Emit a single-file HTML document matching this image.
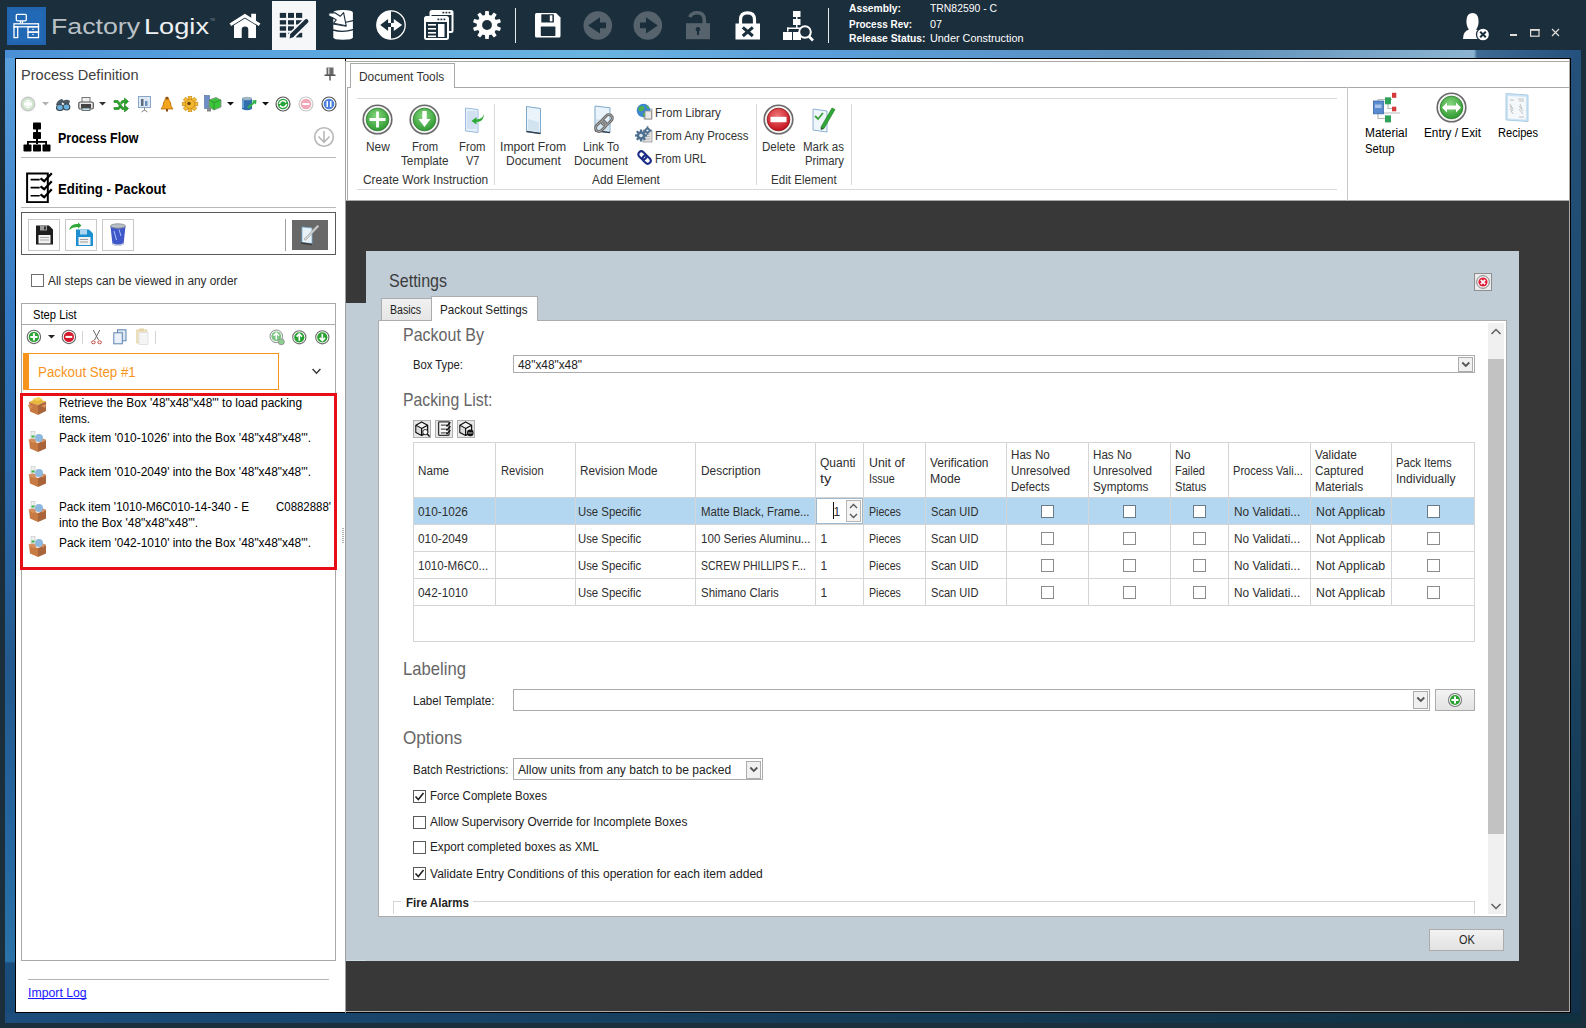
<!DOCTYPE html>
<html><head><meta charset="utf-8"><style>
html,body{margin:0;padding:0;width:1586px;height:1028px;overflow:hidden;background:#1b2e3c;font-family:"Liberation Sans", sans-serif;}
span{display:block;}
</style></head><body>
<div style="position:relative;width:1586px;height:1028px;overflow:hidden;">
<div style="position:absolute;left:5px;top:50px;width:1576px;height:8px;background:linear-gradient(to right,#4a8fd6 0%,#56a0de 12.4%,#60ace0 25%,#6ab4e0 37.8%,#5aa0dc 50.4%,#5a96cc 63.1%,#5a8db8 74.9%,#8cb4d2 93.2%,#3d6b94 93.4%,#23507c 100%)"></div>
<div style="position:absolute;left:5px;top:58px;width:10px;height:965px;background:linear-gradient(to bottom,#5aa0dc 0%,#3378c2 27%,#23598e 63%,#2566a0 80%,#2a72a8 93.6%,#1a4d7c 93.8%,#174a75 100%)"></div>
<div style="position:absolute;left:1571px;top:58px;width:10px;height:965px;background:linear-gradient(to bottom,#24507a 0%,#1b4866 50%,#123049 100%)"></div>
<div style="position:absolute;left:5px;top:1013px;width:1576px;height:10px;background:linear-gradient(to right,#1c4d7c 0%,#173f5f 40%,#11303f 100%)"></div>
<div style="position:absolute;left:15px;top:58px;width:1556px;height:955px;background:#000"></div>
<div style="position:absolute;left:16px;top:59px;width:329px;height:953px;background:#fff"></div>
<div style="position:absolute;left:346px;top:59px;width:1223px;height:142px;background:#fff"></div>
<div style="position:absolute;left:346px;top:201px;width:1223px;height:810px;background:#383838"></div>
<div style="position:absolute;left:1569px;top:59px;width:1px;height:953px;background:#a9a9a9"></div>
<div style="position:absolute;left:346px;top:1011px;width:1224px;height:1px;background:#a9a9a9"></div>
<div style="position:absolute;left:345px;top:61px;width:1px;height:952px;background:#a0a0a0"></div>
<svg style="position:absolute;left:7px;top:7px;" width="39" height="38" viewBox="0 0 39 38"><rect x="0" y="0" width="39" height="38" fill="#2264ae"/><rect x="3" y="3" width="33" height="32" fill="#2169b5"/>
<g fill="none" stroke="#fff" stroke-width="1.3">
<rect x="9.3" y="7.3" width="10" height="6.5" rx="1"/>
<path d="M13.5 14v2.3M15.5 14v2.3"/>
<rect x="7" y="16.8" width="24.5" height="3"/>
<rect x="7" y="19.8" width="3.7" height="10.8"/>
<rect x="21" y="19.8" width="10.5" height="5.3"/>
<rect x="21" y="25.1" width="10.5" height="5.5"/>
</g><path d="M25 22.3h2M25 27.6h2" stroke="#fff" stroke-width="0.8"/></svg>
<span id="t0" style="position:absolute;left:51px;top:16.15px;font-size:22.5px;line-height:22.5px;font-weight:400;color:#b9c1c6;white-space:nowrap;transform:scaleX(1.1864);transform-origin:0 0;">Factory</span>
<span id="t1" style="position:absolute;left:143.5px;top:16.15px;font-size:22.5px;line-height:22.5px;font-weight:400;color:#eef1f3;white-space:nowrap;transform:scaleX(1.2082);transform-origin:0 0;">Logix</span>
<span id="t2" style="position:absolute;left:210px;top:17.61px;font-size:4px;line-height:4px;font-weight:400;color:#7d8a93;white-space:nowrap;transform:scaleX(0.8649);transform-origin:0 0;">TM</span>
<svg style="position:absolute;left:228px;top:12px;" width="34" height="28" viewBox="0 0 34 28"><path d="M23.2 1.8 H28 V9.5 L23.2 6.8 Z" fill="#fff"/><path d="M2.4 12.8 L16.9 3.6 L31.6 12.8" fill="none" stroke="#fff" stroke-width="3.1" stroke-linejoin="miter"/>
<path d="M6 13.2 L16.9 6.6 L28 13.2 V26 H20.3 V17.8 Q20.3 14.5 17 14.5 Q13.7 14.5 13.7 17.8 V26 H6 Z" fill="#fff"/></svg>
<div style="position:absolute;left:272px;top:1px;width:44px;height:49px;background:#f6f7f9"></div>
<svg style="position:absolute;left:272px;top:5px;" width="44" height="40" viewBox="0 0 44 40"><g fill="#1b2e3c"><rect x="7.8" y="7.9" width="6.3" height="5"/><rect x="16" y="7.9" width="6" height="5"/><rect x="24" y="7.9" width="6.2" height="5"/>
<rect x="7.8" y="15.2" width="6.3" height="4.3"/><rect x="16" y="15.2" width="6" height="4.3"/><rect x="24" y="15.2" width="6.2" height="4.3"/>
<rect x="7.8" y="21.3" width="6.3" height="4.4"/><rect x="16" y="21.3" width="6" height="4.4"/><rect x="24" y="21.3" width="6.2" height="4.4"/>
<rect x="7.8" y="27.8" width="6.3" height="4.6"/><rect x="16" y="27.8" width="6" height="4.6"/><rect x="24" y="27.8" width="6.2" height="4.6"/></g>
<path d="M19 31.5 L35.5 15.3" stroke="#f6f7f9" stroke-width="7.5" stroke-linecap="round"/>
<path d="M20.3 30 L34.3 16.3" stroke="#1b2e3c" stroke-width="4.2" stroke-linecap="round"/><path d="M17.6 33.4 L18.6 28.6 L22 31.8 Z" fill="#1b2e3c"/></svg>
<svg style="position:absolute;left:322px;top:6px;" width="40" height="40" viewBox="0 0 40 40"><path d="M11.3 6.5 Q11.3 4 21 4 Q30.9 4 30.9 6.5 V31.3 Q30.9 33.8 21 33.8 Q11.3 33.8 11.3 31.3 Z" fill="#fff"/>
<path d="M11 24 Q21 26.8 31.2 23.6" fill="none" stroke="#1b2e3c" stroke-width="1.3"/>
<path d="M11 18 L24.4 20.3 M23.8 16.3 L31.2 14.6" fill="none" stroke="#1b2e3c" stroke-width="1.1"/>
<path d="M6.8 6.9 L13 6.7 L18.2 10.3 L21.6 6.6 L24.2 19.8 L11.6 17.2 L14.3 13.9 L11.2 12 L6.8 10 Z" fill="#fff" stroke="#1b2e3c" stroke-width="1.1" stroke-linejoin="round"/></svg>
<svg style="position:absolute;left:376px;top:10px;" width="30" height="30" viewBox="0 0 30 30"><circle cx="15" cy="15" r="14.2" fill="#1b2e3c" stroke="#fff" stroke-width="1.3"/><path d="M15 0.8 A14.2 14.2 0 0 0 15 29.2 Z" fill="#fff"/>
<path d="M4.2 15 L12.1 9 V13 H15 V17 H12.1 V21 Z" fill="#1b2e3c"/><path d="M26.2 15 L17.8 9 V13 H15 V17 H17.8 V21 Z" fill="#fff"/></svg>
<svg style="position:absolute;left:424px;top:10px;" width="30" height="30" viewBox="0 0 30 30"><g fill="none" stroke="#fff" stroke-width="2"><rect x="6.5" y="1" width="22" height="21" rx="1.5"/></g>
<rect x="1" y="7" width="23" height="22" rx="1.5" fill="#1b2e3c" stroke="#fff" stroke-width="2"/>
<rect x="1" y="7" width="23" height="5" fill="#fff"/><rect x="6.5" y="1" width="22" height="4" fill="#fff"/>
<g fill="#1b2e3c"><rect x="13.5" y="8.6" width="1.8" height="1.6"/><rect x="16.5" y="8.6" width="1.8" height="1.6"/><rect x="19.5" y="8.6" width="1.8" height="1.6"/><rect x="18.5" y="1.8" width="1.8" height="1.6"/><rect x="21.5" y="1.8" width="1.8" height="1.6"/><rect x="24.5" y="1.8" width="1.8" height="1.6"/></g>
<g fill="#fff"><rect x="4" y="14" width="8" height="1.6"/><rect x="4" y="18" width="8" height="1.6"/><rect x="4" y="22" width="8" height="1.6"/><rect x="4" y="25.5" width="8" height="1.6"/><rect x="14" y="14" width="6.5" height="13"/></g></svg>
<svg style="position:absolute;left:472px;top:10px;" width="30" height="30" viewBox="0 0 30 30"><path d="M12.88 5.43 L13.27 0.91 L16.73 0.91 L17.12 5.43 L18.91 6.01 L21.88 2.58 L24.68 4.61 L22.34 8.51 L23.44 10.03 L27.87 9.00 L28.94 12.29 L24.75 14.06 L24.75 15.94 L28.94 17.71 L27.87 21.00 L23.44 19.97 L22.34 21.49 L24.68 25.39 L21.88 27.42 L18.91 23.99 L17.12 24.57 L16.73 29.09 L13.27 29.09 L12.88 24.57 L11.09 23.99 L8.12 27.42 L5.32 25.39 L7.66 21.49 L6.56 19.97 L2.13 21.00 L1.06 17.71 L5.25 15.94 L5.25 14.06 L1.06 12.29 L2.13 9.00 L6.56 10.03 L7.66 8.51 L5.32 4.61 L8.12 2.58 L11.09 6.01 Z" fill="#fff"/><circle cx="15" cy="15" r="10.3" fill="#fff"/><circle cx="15" cy="15" r="4.9" fill="#1b2e3c"/></svg>
<div style="position:absolute;left:515px;top:8px;width:1px;height:35px;background:#e8ecef"></div>
<svg style="position:absolute;left:535px;top:13px;" width="26" height="25" viewBox="0 0 26 25"><path d="M0 1.5 Q0 0 1.5 0 H21 L25.5 4.5 V23 Q25.5 24.5 24 24.5 H1.5 Q0 24.5 0 23 Z" fill="#fff"/>
<rect x="6.3" y="1.2" width="12.6" height="8.4" rx="0.6" fill="#1b2e3c"/><rect x="14.8" y="2.3" width="2.6" height="6" fill="#fff"/>
<rect x="5.8" y="13.6" width="14.6" height="9.3" rx="0.6" fill="#1b2e3c"/></svg>
<svg style="position:absolute;left:583px;top:11px;" width="30" height="30" viewBox="0 0 30 30"><circle cx="14.8" cy="14.5" r="14.3" fill="#56636d"/><path d="M5 14.4 L17 6.3 V11.4 H23 V17.3 H17 V22.5 Z" fill="#1b2e3c"/></svg>
<svg style="position:absolute;left:633px;top:11px;" width="30" height="30" viewBox="0 0 30 30"><circle cx="14.8" cy="14.5" r="14.3" fill="#56636d"/><path d="M24.8 14.4 L13 6.3 V11.4 H7 V17.3 H13 V22.5 Z" fill="#1b2e3c"/></svg>
<svg style="position:absolute;left:686px;top:11px;" width="25" height="29" viewBox="0 0 25 29"><path d="M3.8 6.2 Q5.5 1.8 11 1.8 Q18.3 1.8 18.3 9 V13" fill="none" stroke="#56636d" stroke-width="3.6"/>
<rect x="0" y="12.2" width="24" height="16" fill="#56636d"/><circle cx="12" cy="18.2" r="2.3" fill="#1b2e3c"/><rect x="11" y="19" width="2" height="5" fill="#1b2e3c"/></svg>
<svg style="position:absolute;left:735px;top:11px;" width="26" height="29" viewBox="0 0 26 29"><path d="M5.5 13 V8.5 Q5.5 1.8 12.5 1.8 Q19.5 1.8 19.5 8.5 V13" fill="none" stroke="#fff" stroke-width="3.2"/>
<rect x="0.5" y="12.5" width="24.5" height="16" fill="#fff"/><path d="M7.8 16.3 L17.8 25 M17.8 16.3 L7.8 25" stroke="#1b2e3c" stroke-width="3"/></svg>
<svg style="position:absolute;left:782px;top:10px;" width="32" height="32" viewBox="0 0 32 32"><g fill="#fff"><rect x="11" y="1" width="7.5" height="6"/><rect x="14" y="7" width="1.5" height="2"/><rect x="11" y="9" width="7.5" height="6"/><rect x="14" y="15" width="1.5" height="3"/>
<rect x="5" y="17.5" width="14" height="1.5"/><rect x="5" y="17.5" width="1.5" height="4"/>
<rect x="1" y="22" width="9" height="8"/><rect x="11" y="22" width="8" height="8"/></g>
<circle cx="23" cy="22" r="5.8" fill="#1b2e3c" stroke="#fff" stroke-width="2"/><path d="M26.5 26 L31 30.5" stroke="#fff" stroke-width="2.6"/></svg>
<div style="position:absolute;left:828px;top:8px;width:1px;height:35px;background:#e8ecef"></div>
<span id="t3" style="position:absolute;left:849px;top:3.27px;font-size:11.5px;line-height:11.5px;font-weight:700;color:#fff;white-space:nowrap;transform:scaleX(0.8939);transform-origin:0 0;">Assembly:</span>
<span id="t4" style="position:absolute;left:929.5px;top:3.27px;font-size:11.5px;line-height:11.5px;font-weight:400;color:#fff;white-space:nowrap;transform:scaleX(0.9037);transform-origin:0 0;">TRN82590 - C</span>
<span id="t5" style="position:absolute;left:849px;top:18.67px;font-size:11.5px;line-height:11.5px;font-weight:700;color:#fff;white-space:nowrap;transform:scaleX(0.8645);transform-origin:0 0;">Process Rev:</span>
<span id="t6" style="position:absolute;left:929.5px;top:18.67px;font-size:11.5px;line-height:11.5px;font-weight:400;color:#fff;white-space:nowrap;transform:scaleX(0.9377);transform-origin:0 0;">07</span>
<span id="t7" style="position:absolute;left:849px;top:33.27px;font-size:11.5px;line-height:11.5px;font-weight:700;color:#fff;white-space:nowrap;transform:scaleX(0.8931);transform-origin:0 0;">Release Status:</span>
<span id="t8" style="position:absolute;left:929.5px;top:33.27px;font-size:11.5px;line-height:11.5px;font-weight:400;color:#fff;white-space:nowrap;transform:scaleX(0.9437);transform-origin:0 0;">Under Construction</span>
<svg style="position:absolute;left:1460px;top:12px;" width="30" height="30" viewBox="0 0 30 30"><path d="M3 27 Q3 19 9 17.5 Q6 14 6.5 8 Q7 1 12.5 1 Q18 1 18.5 8 Q19 14 16 17.5 Q20 18.5 21.5 20 V27 Z" fill="#fff"/>
<circle cx="23" cy="22.5" r="6.5" fill="#fff" stroke="#1b2e3c" stroke-width="1.3"/><path d="M20.2 19.7 L25.8 25.3 M25.8 19.7 L20.2 25.3" stroke="#1b2e3c" stroke-width="2"/></svg>
<div style="position:absolute;left:1510px;top:34px;width:7px;height:2px;background:#e2ddd8"></div>
<svg style="position:absolute;left:1529px;top:28px;" width="12" height="10" viewBox="0 0 12 10"><rect x="1.6" y="1.6" width="8.4" height="6.6" fill="none" stroke="#e2ddd8" stroke-width="1.2"/><rect x="1" y="1" width="9.6" height="1.8" fill="#e2ddd8"/></svg>
<svg style="position:absolute;left:1550px;top:27px;" width="12" height="12" viewBox="0 0 12 12"><path d="M2 2 L9 9 M9 2 L2 9" stroke="#e2ddd8" stroke-width="1.2"/></svg>
<span id="t9" style="position:absolute;left:21px;top:67.18px;font-size:15.5px;line-height:15.5px;font-weight:400;color:#404040;white-space:nowrap;transform:scaleX(0.9406);transform-origin:0 0;">Process Definition</span>
<svg style="position:absolute;left:324px;top:67px;" width="12" height="14" viewBox="0 0 12 14"><rect x="2.5" y="0.5" width="7" height="7.5" fill="#6b6b6b"/><rect x="4" y="1" width="1.5" height="6.5" fill="#c8c8c8"/><rect x="0.5" y="7.5" width="11" height="1.5" fill="#555"/><rect x="5.3" y="9" width="1.4" height="4.5" fill="#555"/></svg>
<svg style="position:absolute;left:20px;top:96px;" width="16" height="16" viewBox="0 0 16 16"><circle cx="8" cy="8" r="6.8" fill="#e2efe2" stroke="#c4c4c4" stroke-width="1.2"/><path d="M8 4 V12 M4 8 H12" stroke="#fff" stroke-width="2.4"/><circle cx="8" cy="8" r="5.3" fill="none" stroke="#b5dcb5" stroke-width="0.8"/></svg>
<svg style="position:absolute;left:42px;top:102px;" width="7" height="4" viewBox="0 0 7 4"><path d="M0 0 H7 L3.5 3.5 Z" fill="#b0b0b0"/></svg>
<svg style="position:absolute;left:55px;top:97px;" width="16" height="14" viewBox="0 0 16 14"><path d="M1 8 Q2 3 7 2 L9 4 Q6 6 6 9 Z" fill="#4b5964"/><path d="M7 5 Q11 1 15 4 L13 10 Z" fill="#4b5964"/><ellipse cx="5" cy="10.5" rx="3.5" ry="3" fill="#6cb2df" stroke="#3e4a52" stroke-width="1.2"/><ellipse cx="11.5" cy="10" rx="3.3" ry="3" fill="#6cb2df" stroke="#3e4a52" stroke-width="1.2"/></svg>
<svg style="position:absolute;left:78px;top:97px;" width="16" height="14" viewBox="0 0 16 14"><rect x="4" y="0.5" width="8" height="5" fill="#f0f0f0" stroke="#777" stroke-width="1"/><rect x="0.8" y="5" width="14.5" height="7" rx="1.5" fill="#e8e8e8" stroke="#555" stroke-width="1.2"/><rect x="3" y="7" width="10" height="4" fill="#444"/><rect x="4" y="11" width="8" height="2.5" fill="#bfe0f0" stroke="#555" stroke-width="0.8"/></svg>
<svg style="position:absolute;left:99px;top:102px;" width="7" height="4" viewBox="0 0 7 4"><path d="M0 0 H7 L3.5 3.5 Z" fill="#333"/></svg>
<svg style="position:absolute;left:113px;top:97px;" width="16" height="15" viewBox="0 0 16 15"><path d="M1 3.5 H5 L10 10.5 H11.5 V8 L15.5 11.5 L11.5 15 V12.5 H9 L4 5.5 H1 Z M1 10.5 H5 L6.3 9 L7.6 10.8 L6 12.5 H1 Z M9 3.5 H11.5 V1 L15.5 4.5 L11.5 8 V5.5 H10 L8.6 7.2 L7.5 5.5 Z" fill="#2aa52a" stroke="#167a16" stroke-width="0.6"/></svg>
<svg style="position:absolute;left:138px;top:96px;" width="14" height="17" viewBox="0 0 14 17"><rect x="0.5" y="0.5" width="12" height="11" fill="#dfe9f5" stroke="#8aa6c8" stroke-width="1"/><rect x="3" y="3" width="2.5" height="7" fill="#5a6a80"/><rect x="7" y="5" width="2.5" height="5" fill="#6a8fbf"/><path d="M6.5 11.5 V14.5 M3.5 16 L6.5 14 L9.5 16" stroke="#888" stroke-width="1" fill="none"/></svg>
<svg style="position:absolute;left:160px;top:96px;" width="14" height="17" viewBox="0 0 14 17"><path d="M7 1 Q9 1 9 4 Q11 6 11 10 L13 13 H1 L3 10 Q3 6 5 4 Q5 1 7 1 Z" fill="#f3a51b" stroke="#b86b0c" stroke-width="0.8"/><rect x="6" y="13" width="2" height="2.5" fill="#8a4b10"/><path d="M6 1 h2 v2.5 h-2z" fill="#8a5020"/></svg>
<svg style="position:absolute;left:181px;top:96px;" width="18" height="16" viewBox="0 0 18 16"><g transform="translate(9 8)" fill="#f2b830" stroke="#c7861a" stroke-width="0.6"><circle r="5.5"/><g><rect x="-1.8" y="-7.8" width="3.6" height="3.5"/><rect x="-1.8" y="4.3" width="3.6" height="3.5"/><rect x="-7.8" y="-1.8" width="3.5" height="3.6"/><rect x="4.3" y="-1.8" width="3.5" height="3.6"/></g><g transform="rotate(45)"><rect x="-1.8" y="-7.8" width="3.6" height="3.5"/><rect x="-1.8" y="4.3" width="3.6" height="3.5"/><rect x="-7.8" y="-1.8" width="3.5" height="3.6"/><rect x="4.3" y="-1.8" width="3.5" height="3.6"/></g></g><circle cx="8" cy="7.5" r="1.8" fill="#6b4a10"/></svg>
<svg style="position:absolute;left:204px;top:95px;" width="18" height="17" viewBox="0 0 18 17"><rect x="0.5" y="0.5" width="5" height="13" fill="#6e8fc5" stroke="#4d6da3" stroke-width="0.6"/><path d="M5 5 L12 2.5 L17 5 V12 L10 15 L5 12 Z" fill="#3dc43d" stroke="#888" stroke-width="0.8"/><path d="M5 5 L10 7.5 L17 5 M10 7.5 V15" stroke="#2a8f2a" stroke-width="0.8" fill="none"/><rect x="3" y="13" width="4" height="3.5" fill="#888"/></svg>
<svg style="position:absolute;left:227px;top:102px;" width="7" height="4" viewBox="0 0 7 4"><path d="M0 0 H7 L3.5 3.5 Z" fill="#111"/></svg>
<svg style="position:absolute;left:241px;top:96px;" width="16" height="16" viewBox="0 0 16 16"><path d="M1 2.5 Q6 0 11 2.5 V13 Q6 15.5 1 13 Z" fill="#2f6fae"/><ellipse cx="6" cy="2.5" rx="5" ry="1.8" fill="#9fb4c4"/><path d="M2 4 V12" stroke="#8fc3ee" stroke-width="1.2"/><path d="M6 11 L12 6 L11 4.5 L15.5 4 L15 8.5 L13.5 7.3 L8 12.5 Z" fill="#2fb14a"/></svg>
<svg style="position:absolute;left:262px;top:102px;" width="7" height="4" viewBox="0 0 7 4"><path d="M0 0 H7 L3.5 3.5 Z" fill="#111"/></svg>
<svg style="position:absolute;left:275px;top:96px;" width="16" height="16" viewBox="0 0 16 16"><circle cx="8" cy="8" r="7" fill="#fff" stroke="#555" stroke-width="1.2"/><circle cx="8" cy="8" r="5.3" fill="#29a33a"/><path d="M4.5 8 A3.5 3.5 0 0 1 11 6.5 M11.5 8 A3.5 3.5 0 0 1 5 9.5" stroke="#fff" stroke-width="1.5" fill="none"/></svg>
<svg style="position:absolute;left:298px;top:96px;" width="16" height="16" viewBox="0 0 16 16"><circle cx="8" cy="8" r="7" fill="#fff" stroke="#c8c8c8" stroke-width="1.2"/><circle cx="8" cy="8" r="5.3" fill="#f0a8b8"/><rect x="4.5" y="7" width="7" height="2" fill="#fff"/></svg>
<svg style="position:absolute;left:321px;top:96px;" width="16" height="16" viewBox="0 0 16 16"><circle cx="8" cy="8" r="7" fill="#fff" stroke="#555" stroke-width="1.2"/><circle cx="8" cy="8" r="5.3" fill="#4b7fe0"/><rect x="5.5" y="5" width="1.5" height="6" fill="#fff"/><rect x="9" y="5" width="1.5" height="6" fill="#fff"/></svg>
<svg style="position:absolute;left:23px;top:122px;" width="28" height="30" viewBox="0 0 28 30"><g fill="#000"><rect x="10" y="0.5" width="8" height="7" rx="0.8"/><rect x="13" y="7" width="2" height="3"/><rect x="10" y="10" width="8" height="7" rx="0.8"/><rect x="13" y="17" width="2" height="5"/>
<rect x="4" y="19" width="20" height="1.8"/><rect x="4" y="19" width="1.8" height="4"/><rect x="22.2" y="19" width="1.8" height="4"/>
<rect x="0.5" y="22.5" width="8" height="7" rx="0.8"/><rect x="10" y="22.5" width="8" height="7" rx="0.8"/><rect x="19.5" y="22.5" width="8" height="7" rx="0.8"/></g></svg>
<span id="t10" style="position:absolute;left:57.5px;top:131.45px;font-size:14px;line-height:14px;font-weight:700;color:#000;white-space:nowrap;transform:scaleX(0.8918);transform-origin:0 0;">Process Flow</span>
<svg style="position:absolute;left:313px;top:126px;" width="22" height="22" viewBox="0 0 22 22"><circle cx="11" cy="11" r="9.3" fill="none" stroke="#b8b8b8" stroke-width="1.6"/><path d="M11 5 V16 M5.5 10.5 L11 16.3 L16.5 10.5" fill="none" stroke="#b8b8b8" stroke-width="1.6"/></svg>
<div style="position:absolute;left:21px;top:157px;width:315px;height:1px;background:#b9b9b9"></div>
<svg style="position:absolute;left:25px;top:171px;" width="28" height="32" viewBox="0 0 28 32"><rect x="2.1" y="2.5" width="20.7" height="28.7" fill="none" stroke="#000" stroke-width="2"/>
<g stroke="#000" stroke-width="1.6"><path d="M5.6 8.6 H14.7 M5.6 16.6 H14.7 M5.6 24.7 H14.7"/></g>
<g fill="none" stroke="#000" stroke-width="2.3" stroke-linejoin="miter"><path d="M15.5 7.3 L19.2 10.2 L26.8 2.3"/><path d="M15.5 15.3 L19.2 18.2 L26.8 10.3"/><path d="M15.5 23.3 L19.2 26.2 L26.8 18.3"/></g></svg>
<span id="t11" style="position:absolute;left:57.5px;top:181.65px;font-size:14px;line-height:14px;font-weight:700;color:#000;white-space:nowrap;transform:scaleX(0.9445);transform-origin:0 0;">Editing - Packout</span>
<div style="position:absolute;left:21px;top:207px;width:315px;height:1px;background:#b9b9b9"></div>
<div style="position:absolute;left:21px;top:212px;width:315px;height:43px;box-sizing:border-box;border:1px solid #5a5a5a;background:#fff"></div>
<div style="position:absolute;left:28px;top:219px;width:32px;height:32px;box-sizing:border-box;border:1px solid #c8c8c8"></div>
<div style="position:absolute;left:65px;top:219px;width:32px;height:32px;box-sizing:border-box;border:1px solid #c8c8c8"></div>
<div style="position:absolute;left:102px;top:219px;width:32px;height:32px;box-sizing:border-box;border:1px solid #c8c8c8"></div>
<svg style="position:absolute;left:35px;top:224px;" width="19" height="22" viewBox="0 0 19 22"><path d="M1 1.5 H14 L18 5.5 V20.5 H1 Z" fill="#1e1e1e"/><rect x="5" y="1.5" width="7" height="5" fill="#9a9a9a"/><rect x="9" y="2.5" width="2" height="3" fill="#333"/><rect x="3.5" y="11" width="12" height="8.5" fill="#f2f2f2"/><path d="M5 13.5 H14 M5 16 H14" stroke="#999" stroke-width="0.8"/></svg>
<svg style="position:absolute;left:68px;top:222px;" width="27" height="25" viewBox="0 0 27 25"><path d="M8 7.5 H21 L25 11.5 V24 H8 Z" fill="#1d8fd0"/><rect x="12" y="7.5" width="7" height="5" fill="#aed6ef"/><rect x="10.5" y="15" width="12" height="8" fill="#f2f2f2"/><path d="M12 17.5 H20 M12 20 H20" stroke="#888" stroke-width="0.8"/><path d="M1 8 Q3 1 10 2 V0.5 L13.5 3.5 L10 6.5 V5 Q5 4.5 1 8 Z" fill="#2ea836"/></svg>
<svg style="position:absolute;left:109px;top:223px;" width="18" height="24" viewBox="0 0 18 24"><path d="M1.5 3 H16.5 L14.5 21.5 Q9 24 3.5 21.5 Z" fill="#3f57c8"/><ellipse cx="9" cy="3" rx="7.5" ry="2.2" fill="#b7c0c8" stroke="#888" stroke-width="0.8"/><path d="M5 8 L7.5 17 M10 6.5 L12 13" stroke="#a8c4ff" stroke-width="1"/><path d="M3.5 20 Q9 23 14.5 20 V21.8 Q9 24.5 3.5 21.8Z" fill="#cfd6dc"/></svg>
<div style="position:absolute;left:285px;top:219px;width:1px;height:32px;background:#a0a0a0"></div>
<div style="position:absolute;left:292px;top:220px;width:36px;height:30px;background:#686868"></div>
<svg style="position:absolute;left:298px;top:223px;" width="25" height="24" viewBox="0 0 25 24"><path d="M4 4 L14 5 V20.5 L4 19.5 Z" fill="#e8f2f8" stroke="#7aaed6" stroke-width="0.8"/><path d="M3 20 L14 21.5" stroke="#3a3a3a" stroke-width="1.5"/><path d="M6 16 L19.5 2 L21 3.5 L7.5 17.5 Z" fill="#d0d0d0" stroke="#999" stroke-width="0.5"/></svg>
<div style="position:absolute;left:31px;top:274px;width:13px;height:13px;box-sizing:border-box;border:1px solid #6d6d6d;background:#fff"></div>
<span id="t12" style="position:absolute;left:48.3px;top:274.84px;font-size:12px;line-height:12px;font-weight:400;color:#2b2b2b;white-space:nowrap;transform:scaleX(0.9859);transform-origin:0 0;">All steps can be viewed in any order</span>
<div style="position:absolute;left:21px;top:303px;width:315px;height:658px;box-sizing:border-box;border:1px solid #a9a9a9;background:#fff"></div>
<span id="t13" style="position:absolute;left:33.3px;top:308.54px;font-size:12px;line-height:12px;font-weight:400;color:#000;white-space:nowrap;transform:scaleX(0.9357);transform-origin:0 0;">Step List</span>
<div style="position:absolute;left:21px;top:324px;width:315px;height:1px;background:#a9a9a9"></div>
<svg style="position:absolute;left:26px;top:329px;" width="16" height="16" viewBox="0 0 16 16"><circle cx="7.9" cy="7.9" r="6.7" fill="#fff" stroke="#666" stroke-width="1.1"/><circle cx="7.9" cy="7.9" r="5.2" fill="#2aa332"/><path d="M7.9 4.3 V11.5 M4.3 7.9 H11.5" stroke="#fff" stroke-width="2"/></svg>
<svg style="position:absolute;left:48px;top:335px;" width="7" height="4" viewBox="0 0 7 4"><path d="M0 0 H7 L3.5 3.5 Z" fill="#222"/></svg>
<svg style="position:absolute;left:61px;top:329px;" width="16" height="16" viewBox="0 0 16 16"><circle cx="7.9" cy="7.9" r="6.7" fill="#fff" stroke="#666" stroke-width="1.1"/><circle cx="7.9" cy="7.9" r="5.2" fill="#d5192b"/><rect x="4.5" y="6.9" width="6.8" height="2" fill="#fff"/></svg>
<div style="position:absolute;left:82px;top:331px;width:1px;height:13px;background:#d5d5d5"></div>
<svg style="position:absolute;left:90px;top:329px;" width="13" height="17" viewBox="0 0 13 17"><path d="M3.3 1 L8.5 11 M9.8 1 L4.5 11" stroke="#6a6a6a" stroke-width="1"/><ellipse cx="3.4" cy="13.3" rx="1.8" ry="1.5" fill="none" stroke="#c0453b" stroke-width="1"/><ellipse cx="9.6" cy="13.3" rx="1.8" ry="1.5" fill="none" stroke="#c0453b" stroke-width="1"/></svg>
<svg style="position:absolute;left:113px;top:329px;" width="14" height="16" viewBox="0 0 14 16"><rect x="4.5" y="0.8" width="8.5" height="11" fill="#dbe7f3" stroke="#5f84b0" stroke-width="1"/><rect x="0.8" y="3.8" width="8.5" height="11" fill="#eaf1f8" stroke="#5f84b0" stroke-width="1"/></svg>
<svg style="position:absolute;left:136px;top:328px;" width="13" height="17" viewBox="0 0 13 17"><rect x="0.8" y="2" width="10" height="13" fill="#f2e6c4" stroke="#dccb9a" stroke-width="0.8"/><rect x="3" y="4.5" width="9" height="12" fill="#f5f5f5" stroke="#ddd" stroke-width="0.8"/><rect x="3" y="0.5" width="5" height="3" fill="#e5d5a8"/></svg>
<div style="position:absolute;left:155px;top:331px;width:1px;height:13px;background:#d5d5d5"></div>
<svg style="position:absolute;left:269px;top:329px;" width="17" height="18" viewBox="0 0 17 18"><circle cx="7.3" cy="7.3" r="6.3" fill="#fff" stroke="#8a8a8a" stroke-width="1"/><circle cx="7.3" cy="7.3" r="4.9" fill="#7cc482"/><path d="M7.3 4 V10.5 M4.6 6.7 L7.3 4 L10 6.7" stroke="#fff" stroke-width="1.5" fill="none"/><circle cx="12.3" cy="12.8" r="3" fill="#8ccf8f" stroke="#888" stroke-width="0.8"/></svg>
<svg style="position:absolute;left:292px;top:330px;" width="15" height="15" viewBox="0 0 15 15"><circle cx="7.3" cy="7.3" r="6.6" fill="#fff" stroke="#6e6e6e" stroke-width="1.1"/><circle cx="7.3" cy="7.3" r="5.1" fill="#27a22f"/><path d="M7.3 4 V10.8 M4.6 6.7 L7.3 4 L10 6.7" stroke="#fff" stroke-width="1.7" fill="none"/></svg>
<svg style="position:absolute;left:315px;top:330px;" width="15" height="15" viewBox="0 0 15 15"><circle cx="7.3" cy="7.3" r="6.6" fill="#fff" stroke="#6e6e6e" stroke-width="1.1"/><circle cx="7.3" cy="7.3" r="5.1" fill="#27a22f"/><path d="M7.3 3.8 V10.6 M4.6 7.9 L7.3 10.6 L10 7.9" stroke="#fff" stroke-width="1.7" fill="none"/></svg>
<div style="position:absolute;left:23px;top:353px;width:256px;height:37px;box-sizing:border-box;border:1px solid #f7941d;border-left:6px solid #f7941d;background:#fff"></div>
<span id="t14" style="position:absolute;left:37.5px;top:364.95px;font-size:14px;line-height:14px;font-weight:400;color:#f7941d;white-space:nowrap;transform:scaleX(0.9518);transform-origin:0 0;">Packout Step #1</span>
<svg style="position:absolute;left:311px;top:367px;" width="11" height="9" viewBox="0 0 11 9"><path d="M1.6 2 L5.5 6.2 L9.4 2" fill="none" stroke="#3a3a3a" stroke-width="1.5"/></svg>
<div style="position:absolute;left:20px;top:393px;width:317px;height:177px;box-sizing:border-box;border:3px solid #e80e18"></div>
<svg style="position:absolute;left:27px;top:396px;" width="21" height="20" viewBox="0 0 21 20"><path d="M2 6 L10 2.5 L19 5.5 L11 9 Z" fill="#e8b83a"/><path d="M2 6 L11 9 V19 L3 15.5 Z" fill="#c87a43"/><path d="M11 9 L19 5.5 V15 L11 19 Z" fill="#a9643a"/><path d="M0.5 8.5 L6 10.5 L3 13 Z M19.5 7.5 L14 10 L18 12 Z" fill="#d58f5a"/><path d="M5 3 L12 1 L16 3.5 L10 5Z" fill="#f2d060"/></svg>
<svg style="position:absolute;left:27px;top:431px;" width="21" height="22" viewBox="0 0 21 22"><path d="M2 9 L11 12 V21 L3 17.5 Z" fill="#c87a43"/><path d="M11 12 L19 9 V17.5 L11 21 Z" fill="#a9643a"/><path d="M1 9 L5 7 L11 9.5 L6 12 Z M19 8.5 L14 7 L11 9.5 L16 11.5 Z" fill="#d69060"/><circle cx="12" cy="7" r="4" fill="#8db8e0"/><rect x="4" y="0.5" width="4" height="7" fill="#f0f0f0" stroke="#bbb" stroke-width="0.5"/><rect x="4.5" y="4.5" width="3" height="2" fill="#3cb34a"/></svg>
<svg style="position:absolute;left:27px;top:466px;" width="21" height="22" viewBox="0 0 21 22"><path d="M2 9 L11 12 V21 L3 17.5 Z" fill="#c87a43"/><path d="M11 12 L19 9 V17.5 L11 21 Z" fill="#a9643a"/><path d="M1 9 L5 7 L11 9.5 L6 12 Z M19 8.5 L14 7 L11 9.5 L16 11.5 Z" fill="#d69060"/><circle cx="12" cy="7" r="4" fill="#8db8e0"/><rect x="4" y="0.5" width="4" height="7" fill="#f0f0f0" stroke="#bbb" stroke-width="0.5"/><rect x="4.5" y="4.5" width="3" height="2" fill="#3cb34a"/></svg>
<svg style="position:absolute;left:27px;top:501px;" width="21" height="22" viewBox="0 0 21 22"><path d="M2 9 L11 12 V21 L3 17.5 Z" fill="#c87a43"/><path d="M11 12 L19 9 V17.5 L11 21 Z" fill="#a9643a"/><path d="M1 9 L5 7 L11 9.5 L6 12 Z M19 8.5 L14 7 L11 9.5 L16 11.5 Z" fill="#d69060"/><circle cx="12" cy="7" r="4" fill="#8db8e0"/><rect x="4" y="0.5" width="4" height="7" fill="#f0f0f0" stroke="#bbb" stroke-width="0.5"/><rect x="4.5" y="4.5" width="3" height="2" fill="#3cb34a"/></svg>
<svg style="position:absolute;left:27px;top:536px;" width="21" height="22" viewBox="0 0 21 22"><path d="M2 9 L11 12 V21 L3 17.5 Z" fill="#c87a43"/><path d="M11 12 L19 9 V17.5 L11 21 Z" fill="#a9643a"/><path d="M1 9 L5 7 L11 9.5 L6 12 Z M19 8.5 L14 7 L11 9.5 L16 11.5 Z" fill="#d69060"/><circle cx="12" cy="7" r="4" fill="#8db8e0"/><rect x="4" y="0.5" width="4" height="7" fill="#f0f0f0" stroke="#bbb" stroke-width="0.5"/><rect x="4.5" y="4.5" width="3" height="2" fill="#3cb34a"/></svg>
<span id="t15" style="position:absolute;left:59px;top:396.64px;font-size:12px;line-height:12px;font-weight:400;color:#000;white-space:nowrap;transform:scaleX(0.9898);transform-origin:0 0;">Retrieve the Box '48"x48"x48"' to load packing</span>
<span id="t16" style="position:absolute;left:59px;top:412.54px;font-size:12px;line-height:12px;font-weight:400;color:#000;white-space:nowrap;transform:scaleX(0.9683);transform-origin:0 0;">items.</span>
<span id="t17" style="position:absolute;left:59px;top:431.64px;font-size:12px;line-height:12px;font-weight:400;color:#000;white-space:nowrap;transform:scaleX(0.9918);transform-origin:0 0;">Pack item '010-1026' into the Box '48"x48"x48"'.</span>
<span id="t18" style="position:absolute;left:59px;top:466.44px;font-size:12px;line-height:12px;font-weight:400;color:#000;white-space:nowrap;transform:scaleX(0.9918);transform-origin:0 0;">Pack item '010-2049' into the Box '48"x48"x48"'.</span>
<span id="t19" style="position:absolute;left:59px;top:501.34px;font-size:12px;line-height:12px;font-weight:400;color:#000;white-space:nowrap;transform:scaleX(0.9774);transform-origin:0 0;">Pack item '1010-M6C010-14-340 - E</span>
<span id="t20" style="position:absolute;left:276px;top:501.34px;font-size:12px;line-height:12px;font-weight:400;color:#000;white-space:nowrap;transform:scaleX(0.9534);transform-origin:0 0;">C0882888'</span>
<span id="t21" style="position:absolute;left:59px;top:517.24px;font-size:12px;line-height:12px;font-weight:400;color:#000;white-space:nowrap;transform:scaleX(0.9968);transform-origin:0 0;">into the Box '48"x48"x48"'.</span>
<span id="t22" style="position:absolute;left:59px;top:536.64px;font-size:12px;line-height:12px;font-weight:400;color:#000;white-space:nowrap;transform:scaleX(0.9918);transform-origin:0 0;">Pack item '042-1010' into the Box '48"x48"x48"'.</span>
<svg style="position:absolute;left:342px;top:528px;" width="3" height="16" viewBox="0 0 3 16"><g fill="#b0b0b0"><rect x="0" y="0" width="2" height="1"/><rect x="0" y="2" width="2" height="1"/><rect x="0" y="4" width="2" height="1"/><rect x="0" y="6" width="2" height="1"/><rect x="0" y="8" width="2" height="1"/><rect x="0" y="10" width="2" height="1"/><rect x="0" y="12" width="2" height="1"/><rect x="0" y="14" width="2" height="1"/></g></svg>
<div style="position:absolute;left:28px;top:979px;width:301px;height:1px;background:#b4b4b4"></div>
<span id="t23" style="position:absolute;left:28px;top:986.84px;font-size:12px;line-height:12px;font-weight:400;color:#1a1aff;white-space:nowrap;transform:scaleX(1.0231);transform-origin:0 0;text-decoration:underline;text-decoration-skip-ink:none;">Import Log</span>
<div style="position:absolute;left:345px;top:61px;width:1225px;height:1px;background:#a9a9a9"></div>
<div style="position:absolute;left:350px;top:63px;width:105px;height:25px;box-sizing:border-box;border:1px solid #a9a9a9;border-bottom:none;background:#fff"></div>
<div style="position:absolute;left:347px;top:87px;width:4px;height:1px;background:#a9a9a9"></div>
<div style="position:absolute;left:454px;top:87px;width:1116px;height:1px;background:#a9a9a9"></div>
<div style="position:absolute;left:347px;top:87px;width:1px;height:114px;background:#a9a9a9"></div>
<div style="position:absolute;left:346px;top:200px;width:1224px;height:1px;background:#a9a9a9"></div>
<span id="t24" style="position:absolute;left:359px;top:71.04px;font-size:12px;line-height:12px;font-weight:400;color:#333;white-space:nowrap;transform:scaleX(0.9938);transform-origin:0 0;">Document Tools</span>
<div style="position:absolute;left:357px;top:98px;width:980px;height:1px;background:#d8d8d8"></div>
<div style="position:absolute;left:357px;top:189px;width:980px;height:1px;background:#d8d8d8"></div>
<div style="position:absolute;left:1347px;top:87px;width:1px;height:114px;background:#c8c8c8"></div>
<div style="position:absolute;left:494px;top:104px;width:1px;height:81px;background:#d8d8d8"></div>
<div style="position:absolute;left:756px;top:104px;width:1px;height:81px;background:#d8d8d8"></div>
<div style="position:absolute;left:851px;top:104px;width:1px;height:81px;background:#d8d8d8"></div>
<svg style="position:absolute;left:362px;top:104px;" width="31" height="31" viewBox="0 0 31 31"><defs><radialGradient id="gn" cx="45%" cy="35%" r="65%"><stop offset="0" stop-color="#86d67e"/><stop offset="1" stop-color="#2f9a32"/></radialGradient></defs>
<circle cx="15.5" cy="15.5" r="14.3" fill="#f4f4f4" stroke="#6a6a6a" stroke-width="1.6"/><circle cx="15.5" cy="15.5" r="11.3" fill="url(#gn)" stroke="#2a7a2a" stroke-width="0.8"/><path d="M15.5 7.5 V23.5 M7.5 15.5 H23.5" stroke="#fff" stroke-width="2.8"/></svg>
<svg style="position:absolute;left:409px;top:104px;" width="31" height="31" viewBox="0 0 31 31"><defs><radialGradient id="gd" cx="45%" cy="35%" r="65%"><stop offset="0" stop-color="#86d67e"/><stop offset="1" stop-color="#2f9a32"/></radialGradient></defs>
<circle cx="15.5" cy="15.5" r="14.3" fill="#f4f4f4" stroke="#6a6a6a" stroke-width="1.6"/><circle cx="15.5" cy="15.5" r="11.3" fill="url(#gd)" stroke="#2a7a2a" stroke-width="0.8"/><path d="M13.3 7 H17.7 V15 H21.5 L15.5 23 L9.5 15 H13.3 Z" fill="#fff"/></svg>
<svg style="position:absolute;left:463px;top:105px;" width="23" height="30" viewBox="0 0 23 30"><path d="M2.5 3 L15 4.5 V27.5 L2.5 26 Z" fill="#e6f0fa" stroke="#9dbbe0" stroke-width="1"/><g stroke="#a9c4e0" stroke-width="0.7"><path d="M4 7 H13.5 M4 9 H13.5 M4 11 H13.5 M4 13 H13.5 M4 15 H13.5 M4 17 H13.5 M4 19 H13.5 M4 21 H13.5 M4 23 H13.5"/></g><path d="M21 8.5 Q20 14 13.5 14.5 V12 L8.5 16 L13.5 19.5 V17 Q21 17 21 8.5 Z" fill="#2ea836"/></svg>
<svg style="position:absolute;left:524px;top:105px;" width="20" height="30" viewBox="0 0 20 30"><path d="M2.5 1.5 L16.5 3.5 V28.5 L2.5 26.5 Z" fill="#e9f3f9" stroke="#7da9cc" stroke-width="1"/><path d="M2.5 26.5 L16.5 28.5" stroke="#2f3f4f" stroke-width="1.5"/><path d="M4 14 L15 17 V27 L4 25.5Z" fill="#d2e4ef"/></svg>
<svg style="position:absolute;left:590px;top:105px;" width="30" height="30" viewBox="0 0 30 30"><path d="M5 1 L20 2.8 V27.5 L5 25.8 Z" fill="#e9f3f9" stroke="#7da9cc" stroke-width="1"/><path d="M5 25.8 L20 27.5" stroke="#2f3f4f" stroke-width="1.5"/><path d="M6 14 L19 16 V26.5 L6 25Z" fill="#d2e4ef"/>
<g transform="rotate(-45 15 17)"><rect x="3" y="13.5" width="12" height="7" rx="3.5" fill="none" stroke="#6d6d6d" stroke-width="2.8"/><rect x="12" y="13.5" width="12" height="7" rx="3.5" fill="none" stroke="#6d6d6d" stroke-width="2.8"/><rect x="3" y="13.5" width="12" height="7" rx="3.5" fill="none" stroke="#a8a8a8" stroke-width="0.9"/><rect x="12" y="13.5" width="12" height="7" rx="3.5" fill="none" stroke="#a8a8a8" stroke-width="0.9"/></g></svg>
<svg style="position:absolute;left:636px;top:103px;" width="17" height="17" viewBox="0 0 17 17"><rect x="8" y="6" width="8" height="10" fill="#e4e4e4" stroke="#9a9a9a" stroke-width="0.8"/><path d="M10 9 H14 M10 11 H14 M10 13 H14" stroke="#aaa" stroke-width="0.7"/><circle cx="7.5" cy="7.5" r="6.8" fill="#3d86d4"/><path d="M2.5 4.5 Q5 2 8 3.5 Q9 6 6.5 8 Q4 9 2.5 7.5 Z M7 10 Q10 9 11.5 11.5 Q10 14 7.5 14 Z M10 2 Q13 3 13.5 6 Q11.5 6 10.5 4Z" fill="#4fb04a"/><rect x="9" y="8" width="6.5" height="8" fill="#e8e8e8" stroke="#8a8a8a" stroke-width="0.8"/></svg>
<svg style="position:absolute;left:635px;top:126px;" width="18" height="17" viewBox="0 0 18 17"><rect x="8" y="5" width="9" height="11" fill="#e0e0e0" stroke="#999" stroke-width="0.8"/><path d="M10 8 H15 M10 10.5 H15 M10 13 H15" stroke="#aaa" stroke-width="0.7"/>
<g transform="translate(6 9.5)" fill="#4f6f8f"><circle r="4.3"/><g><rect x="-1.1" y="-6" width="2.2" height="2.5"/><rect x="-1.1" y="3.5" width="2.2" height="2.5"/><rect x="-6" y="-1.1" width="2.5" height="2.2"/><rect x="3.5" y="-1.1" width="2.5" height="2.2"/></g><g transform="rotate(45)"><rect x="-1.1" y="-6" width="2.2" height="2.5"/><rect x="-1.1" y="3.5" width="2.2" height="2.5"/><rect x="-6" y="-1.1" width="2.5" height="2.2"/><rect x="3.5" y="-1.1" width="2.5" height="2.2"/></g></g><circle cx="6" cy="9.5" r="1.8" fill="#dfe8f0"/>
<g transform="translate(12.5 4.5)" fill="#4f6f8f"><circle r="2.8"/><rect x="-0.9" y="-4.2" width="1.8" height="2"/><rect x="-0.9" y="2.2" width="1.8" height="2"/><rect x="-4.2" y="-0.9" width="2" height="1.8"/><rect x="2.2" y="-0.9" width="2" height="1.8"/></g><circle cx="12.5" cy="4.5" r="1.1" fill="#dfe8f0"/></svg>
<svg style="position:absolute;left:636px;top:149px;" width="17" height="17" viewBox="0 0 17 17"><g transform="rotate(45 8.5 8.5)" fill="none" stroke="#1c2c86" stroke-width="2.1"><rect x="1" y="5.5" width="9" height="6" rx="3"/><rect x="7" y="5.5" width="9" height="6" rx="3"/></g></svg>
<span id="t25" style="position:absolute;left:366px;top:140.54px;font-size:12px;line-height:12px;font-weight:400;color:#333;white-space:nowrap;transform:scaleX(0.9910);transform-origin:0 0;">New</span>
<span id="t26" style="position:absolute;left:411.5px;top:140.54px;font-size:12px;line-height:12px;font-weight:400;color:#333;white-space:nowrap;transform:scaleX(0.9357);transform-origin:0 0;">From</span>
<span id="t27" style="position:absolute;left:401.3px;top:154.64px;font-size:12px;line-height:12px;font-weight:400;color:#333;white-space:nowrap;transform:scaleX(0.9774);transform-origin:0 0;">Template</span>
<span id="t28" style="position:absolute;left:458.7px;top:140.54px;font-size:12px;line-height:12px;font-weight:400;color:#333;white-space:nowrap;transform:scaleX(0.9393);transform-origin:0 0;">From</span>
<span id="t29" style="position:absolute;left:465.6px;top:154.64px;font-size:12px;line-height:12px;font-weight:400;color:#333;white-space:nowrap;transform:scaleX(0.9123);transform-origin:0 0;">V7</span>
<span id="t30" style="position:absolute;left:363px;top:174.04px;font-size:12px;line-height:12px;font-weight:400;color:#333;white-space:nowrap;transform:scaleX(0.9950);transform-origin:0 0;">Create Work Instruction</span>
<span id="t31" style="position:absolute;left:500px;top:140.54px;font-size:12px;line-height:12px;font-weight:400;color:#333;white-space:nowrap;transform:scaleX(1.0131);transform-origin:0 0;">Import From</span>
<span id="t32" style="position:absolute;left:506.2px;top:154.64px;font-size:12px;line-height:12px;font-weight:400;color:#333;white-space:nowrap;transform:scaleX(1.0018);transform-origin:0 0;">Document</span>
<span id="t33" style="position:absolute;left:583.3px;top:140.54px;font-size:12px;line-height:12px;font-weight:400;color:#333;white-space:nowrap;transform:scaleX(0.9521);transform-origin:0 0;">Link To</span>
<span id="t34" style="position:absolute;left:574.4px;top:154.64px;font-size:12px;line-height:12px;font-weight:400;color:#333;white-space:nowrap;transform:scaleX(0.9890);transform-origin:0 0;">Document</span>
<span id="t35" style="position:absolute;left:655.4px;top:107.14px;font-size:12px;line-height:12px;font-weight:400;color:#333;white-space:nowrap;transform:scaleX(0.9689);transform-origin:0 0;">From Library</span>
<span id="t36" style="position:absolute;left:655.4px;top:130.04px;font-size:12px;line-height:12px;font-weight:400;color:#333;white-space:nowrap;transform:scaleX(0.9538);transform-origin:0 0;">From Any Process</span>
<span id="t37" style="position:absolute;left:655.4px;top:153.04px;font-size:12px;line-height:12px;font-weight:400;color:#333;white-space:nowrap;transform:scaleX(0.9251);transform-origin:0 0;">From URL</span>
<span id="t38" style="position:absolute;left:591.8px;top:174.04px;font-size:12px;line-height:12px;font-weight:400;color:#333;white-space:nowrap;transform:scaleX(0.9881);transform-origin:0 0;">Add Element</span>
<svg style="position:absolute;left:763px;top:104px;" width="31" height="31" viewBox="0 0 31 31"><defs><radialGradient id="gr" cx="45%" cy="35%" r="65%"><stop offset="0" stop-color="#f07a7a"/><stop offset="1" stop-color="#c4101c"/></radialGradient></defs>
<circle cx="15.5" cy="15.5" r="14.3" fill="#f4f4f4" stroke="#6a6a6a" stroke-width="1.6"/><circle cx="15.5" cy="15.5" r="11.3" fill="url(#gr)" stroke="#8a1010" stroke-width="0.8"/><rect x="7.5" y="12.8" width="16" height="5.4" fill="#fff"/></svg>
<svg style="position:absolute;left:811px;top:105px;" width="26" height="29" viewBox="0 0 26 29"><path d="M2 4 L16 6 V27 L2 25 Z" fill="#eef5fb" stroke="#8fb2d6" stroke-width="1"/><path d="M4 11 L7 14 L12 8" stroke="#3aa23a" stroke-width="1.8" fill="none"/><path d="M10 22 L21 3 L24 4.5 L13 23.5 L10 24.5 Z" fill="#2ea836" stroke="#1b6d20" stroke-width="0.6"/><path d="M10 24.5 L11 22.5 L12.5 23.5 Z" fill="#333"/></svg>
<span id="t39" style="position:absolute;left:762.3px;top:140.54px;font-size:12px;line-height:12px;font-weight:400;color:#333;white-space:nowrap;transform:scaleX(0.9629);transform-origin:0 0;">Delete</span>
<span id="t40" style="position:absolute;left:803.3px;top:140.54px;font-size:12px;line-height:12px;font-weight:400;color:#333;white-space:nowrap;transform:scaleX(0.9605);transform-origin:0 0;">Mark as</span>
<span id="t41" style="position:absolute;left:805px;top:154.64px;font-size:12px;line-height:12px;font-weight:400;color:#333;white-space:nowrap;transform:scaleX(0.9433);transform-origin:0 0;">Primary</span>
<span id="t42" style="position:absolute;left:771px;top:174.04px;font-size:12px;line-height:12px;font-weight:400;color:#333;white-space:nowrap;transform:scaleX(0.9655);transform-origin:0 0;">Edit Element</span>
<svg style="position:absolute;left:1370px;top:92px;" width="32" height="32" viewBox="0 0 32 32"><g stroke="#b8b8b8" stroke-width="1.2" fill="none"><path d="M8 7.5 H22 M8 7.5 V26.5 H16 M13 10 H18 V16.5 H22 M13 21 H30"/></g>
<rect x="3.4" y="9" width="10" height="12.8" fill="#5a8ad0" stroke="#3a68a8" stroke-width="0.8"/><rect x="5" y="12.5" width="6.5" height="3.5" fill="#a8c4ea"/>
<rect x="22" y="0.8" width="4.3" height="5" fill="#d43a3a"/><rect x="22" y="14.7" width="4.3" height="4.6" fill="#d43a3a"/>
<rect x="15" y="5.3" width="6" height="7" fill="#2fa35a"/><rect x="15" y="23.4" width="6" height="7" fill="#2fa35a"/></svg>
<svg style="position:absolute;left:1436px;top:92px;" width="31" height="31" viewBox="0 0 31 31"><defs><radialGradient id="ge" cx="45%" cy="35%" r="65%"><stop offset="0" stop-color="#86d67e"/><stop offset="1" stop-color="#2f9a32"/></radialGradient></defs>
<circle cx="15.5" cy="15.5" r="14.3" fill="#f4f4f4" stroke="#6a6a6a" stroke-width="1.6"/><circle cx="15.5" cy="15.5" r="11.3" fill="url(#ge)" stroke="#2a7a2a" stroke-width="0.8"/><path d="M6 15.5 L11 10.5 V13.5 H20 V10.5 L25 15.5 L20 20.5 V17.5 H11 V20.5 Z" fill="#fff"/></svg>
<svg style="position:absolute;left:1504px;top:92px;" width="28" height="31" viewBox="0 0 28 31"><path d="M2 1.5 L24 3 V29.5 L2 28 Z" fill="#cfe4f3" stroke="#a9cde6" stroke-width="1"/><path d="M4 4 L22 5 V27.5 L4 26.5 Z" fill="#f4f8fb"/><g stroke="#b5b5b5" stroke-width="0.8"><path d="M6 8 H10 M14 7 H20 M15 9 H20 M6 12 L9 17 M16 12 L18 17 M6 14 L9 19 M15 14 L19 19 M6 17 L9 22 M15 17 L19 22 M15 25 H20"/></g></svg>
<span id="t43" style="position:absolute;left:1364.5px;top:127.14px;font-size:12px;line-height:12px;font-weight:400;color:#000;white-space:nowrap;transform:scaleX(0.9909);transform-origin:0 0;">Material</span>
<span id="t44" style="position:absolute;left:1364.5px;top:142.64px;font-size:12px;line-height:12px;font-weight:400;color:#000;white-space:nowrap;transform:scaleX(0.9407);transform-origin:0 0;">Setup</span>
<span id="t45" style="position:absolute;left:1424.2px;top:127.14px;font-size:12px;line-height:12px;font-weight:400;color:#000;white-space:nowrap;transform:scaleX(0.9808);transform-origin:0 0;">Entry / Exit</span>
<span id="t46" style="position:absolute;left:1497.6px;top:127.14px;font-size:12px;line-height:12px;font-weight:400;color:#000;white-space:nowrap;transform:scaleX(0.9225);transform-origin:0 0;">Recipes</span>
<div style="position:absolute;left:346px;top:303px;width:20px;height:658px;background:#c1cdd6"></div>
<div style="position:absolute;left:346px;top:960px;width:23px;height:1px;background:#cddde8"></div>
<div style="position:absolute;left:366px;top:251px;width:1153px;height:710px;background:#c1cdd6"></div>
<span id="t47" style="position:absolute;left:388.5px;top:272.14px;font-size:18.5px;line-height:18.5px;font-weight:400;color:#3c3c3c;white-space:nowrap;transform:scaleX(0.8690);transform-origin:0 0;">Settings</span>
<div style="position:absolute;left:1474px;top:273px;width:18px;height:18px;box-sizing:border-box;border:1px solid #8e8e8e;background:#eaeaea"></div>
<svg style="position:absolute;left:1475px;top:274px;" width="16" height="16" viewBox="0 0 16 16"><circle cx="8" cy="8" r="6.3" fill="#fff" stroke="#7a7a7a" stroke-width="1"/><circle cx="8" cy="8" r="4.6" fill="#e01e38"/><path d="M5.8 5.8 L10.2 10.2 M10.2 5.8 L5.8 10.2" stroke="#fff" stroke-width="1.7"/></svg>
<div style="position:absolute;left:381px;top:298px;width:51px;height:23px;box-sizing:border-box;border:1px solid #acacac;border-bottom:none;background:linear-gradient(#f0f0f0,#e5e5e5)"></div>
<div style="position:absolute;left:431px;top:296px;width:107px;height:25px;box-sizing:border-box;border:1px solid #acacac;border-bottom:none;background:#fff"></div>
<span id="t48" style="position:absolute;left:390.2px;top:303.54px;font-size:12px;line-height:12px;font-weight:400;color:#222;white-space:nowrap;transform:scaleX(0.8799);transform-origin:0 0;">Basics</span>
<span id="t49" style="position:absolute;left:440px;top:303.54px;font-size:12px;line-height:12px;font-weight:400;color:#222;white-space:nowrap;transform:scaleX(0.9715);transform-origin:0 0;">Packout Settings</span>
<div style="position:absolute;left:378px;top:320px;width:1129px;height:597px;box-sizing:border-box;border:1px solid #acacac;background:#fff"></div>
<div style="position:absolute;left:432px;top:320px;width:105px;height:2px;background:#fff"></div>
<div style="position:absolute;left:1488px;top:323px;width:16px;height:591px;background:#f0f0f0"></div>
<div style="position:absolute;left:1488px;top:359px;width:16px;height:475px;background:#c2c2c2"></div>
<svg style="position:absolute;left:1490px;top:327px;" width="12" height="10" viewBox="0 0 12 10"><path d="M1.5 7 L6 2.5 L10.5 7" fill="none" stroke="#606060" stroke-width="1.5"/></svg>
<svg style="position:absolute;left:1490px;top:901px;" width="12" height="10" viewBox="0 0 12 10"><path d="M1.5 3 L6 7.5 L10.5 3" fill="none" stroke="#606060" stroke-width="1.5"/></svg>
<span id="t50" style="position:absolute;left:403.3px;top:325.54px;font-size:18.5px;line-height:18.5px;font-weight:400;color:#666;white-space:nowrap;transform:scaleX(0.8656);transform-origin:0 0;">Packout By</span>
<span id="t51" style="position:absolute;left:413.1px;top:358.64px;font-size:12px;line-height:12px;font-weight:400;color:#222;white-space:nowrap;transform:scaleX(0.9387);transform-origin:0 0;">Box Type:</span>
<div style="position:absolute;left:513px;top:355px;width:962px;height:18px;box-sizing:border-box;border:1px solid #acacac;background:#fff"></div>
<span id="t52" style="position:absolute;left:518px;top:358.84px;font-size:12px;line-height:12px;font-weight:400;color:#222;white-space:nowrap;transform:scaleX(0.9872);transform-origin:0 0;">48"x48"x48"</span>
<div style="position:absolute;left:1458px;top:357px;width:15px;height:15px;box-sizing:border-box;border:1px solid #acacac;background:#f0f0f0"></div>
<svg style="position:absolute;left:1460px;top:360px;" width="12" height="9" viewBox="0 0 12 9"><path d="M2.3 2.5 L5.8 6 L9.3 2.5" fill="none" stroke="#555" stroke-width="1.8"/></svg>
<span id="t53" style="position:absolute;left:403.3px;top:390.54px;font-size:18.5px;line-height:18.5px;font-weight:400;color:#666;white-space:nowrap;transform:scaleX(0.8533);transform-origin:0 0;">Packing List:</span>
<div style="position:absolute;left:413px;top:420px;width:18px;height:18px;box-sizing:border-box;border:1px solid #b0b0b0;background:#e8e8e8"></div>
<div style="position:absolute;left:435px;top:420px;width:18px;height:18px;box-sizing:border-box;border:1px solid #b0b0b0;background:#e8e8e8"></div>
<div style="position:absolute;left:457px;top:420px;width:18px;height:18px;box-sizing:border-box;border:1px solid #b0b0b0;background:#e8e8e8"></div>
<svg style="position:absolute;left:413px;top:420px;" width="18" height="18" viewBox="0 0 18 18"><path d="M8.6 2 L14.6 5.3 V12.4 L8.6 15.4 L2.9 12.4 V5.3 Z" fill="#f4f4f4" stroke="#111" stroke-width="1.3" stroke-linejoin="round"/><path d="M2.9 5.3 L8.6 8.6 L14.6 5.3 M8.6 8.6 V15.4" fill="none" stroke="#111" stroke-width="1.3"/><path d="M3.6 6.2 L8 8.8 V14.4 L3.6 11.9Z" fill="#dcdcdc"/><circle cx="12.3" cy="12.1" r="2.6" fill="#fff" stroke="#222" stroke-width="1"/><path d="M14.2 14 L16.6 16.4" stroke="#111" stroke-width="1.4"/></svg>
<svg style="position:absolute;left:435px;top:420px;" width="18" height="18" viewBox="0 0 18 18"><rect x="3.6" y="1.8" width="10.5" height="13.6" rx="0.8" fill="#f6f6f6" stroke="#333" stroke-width="1.3"/><path d="M5.9 5.1 H10 M5.9 9.1 H10 M5.9 12.9 H10" stroke="#555" stroke-width="1.2"/><path d="M10.6 4.6 L12 6 L15.4 2.3 M10.6 8.6 L12 10 L15.4 6.3 M10.6 12.4 L12 13.8 L15.4 10.1" fill="none" stroke="#111" stroke-width="1.3"/></svg>
<svg style="position:absolute;left:457px;top:420px;" width="18" height="18" viewBox="0 0 18 18"><path d="M8.6 2 L14.6 5.3 V12.4 L8.6 15.4 L2.9 12.4 V5.3 Z" fill="#f4f4f4" stroke="#111" stroke-width="1.3" stroke-linejoin="round"/><path d="M2.9 5.3 L8.6 8.6 L14.6 5.3 M8.6 8.6 V15.4" fill="none" stroke="#111" stroke-width="1.3"/><path d="M3.6 6.2 L8 8.8 V14.4 L3.6 11.9Z" fill="#dcdcdc"/><circle cx="13.3" cy="12.9" r="3.3" fill="#111"/><rect x="11" y="12.2" width="4.6" height="1.5" fill="#888"/></svg>
<div style="position:absolute;left:413px;top:442px;width:1062px;height:200px;box-sizing:border-box;border:1px solid #d5d5d5;background:#fff"></div>
<div style="position:absolute;left:414px;top:498px;width:1060px;height:26px;background:#b3d7f0"></div>
<div style="position:absolute;left:413px;top:497px;width:1062px;height:1px;background:#d5d5d5"></div>
<div style="position:absolute;left:413px;top:524px;width:1062px;height:1px;background:#d5d5d5"></div>
<div style="position:absolute;left:413px;top:551px;width:1062px;height:1px;background:#d5d5d5"></div>
<div style="position:absolute;left:413px;top:578px;width:1062px;height:1px;background:#d5d5d5"></div>
<div style="position:absolute;left:413px;top:605px;width:1062px;height:1px;background:#d5d5d5"></div>
<div style="position:absolute;left:495px;top:442px;width:1px;height:163px;background:#d5d5d5"></div>
<div style="position:absolute;left:575px;top:442px;width:1px;height:163px;background:#d5d5d5"></div>
<div style="position:absolute;left:695px;top:442px;width:1px;height:163px;background:#d5d5d5"></div>
<div style="position:absolute;left:815px;top:442px;width:1px;height:163px;background:#d5d5d5"></div>
<div style="position:absolute;left:863px;top:442px;width:1px;height:163px;background:#d5d5d5"></div>
<div style="position:absolute;left:925px;top:442px;width:1px;height:163px;background:#d5d5d5"></div>
<div style="position:absolute;left:1006px;top:442px;width:1px;height:163px;background:#d5d5d5"></div>
<div style="position:absolute;left:1088px;top:442px;width:1px;height:163px;background:#d5d5d5"></div>
<div style="position:absolute;left:1170px;top:442px;width:1px;height:163px;background:#d5d5d5"></div>
<div style="position:absolute;left:1228px;top:442px;width:1px;height:163px;background:#d5d5d5"></div>
<div style="position:absolute;left:1310px;top:442px;width:1px;height:163px;background:#d5d5d5"></div>
<div style="position:absolute;left:1391px;top:442px;width:1px;height:163px;background:#d5d5d5"></div>
<span id="t54" style="position:absolute;left:418.2px;top:464.94px;font-size:12px;line-height:12px;font-weight:400;color:#2e2e2e;white-space:nowrap;transform:scaleX(0.9714);transform-origin:0 0;">Name</span>
<span id="t55" style="position:absolute;left:500.5px;top:464.94px;font-size:12px;line-height:12px;font-weight:400;color:#2e2e2e;white-space:nowrap;transform:scaleX(0.9255);transform-origin:0 0;">Revision</span>
<span id="t56" style="position:absolute;left:580.4px;top:464.94px;font-size:12px;line-height:12px;font-weight:400;color:#2e2e2e;white-space:nowrap;transform:scaleX(0.9751);transform-origin:0 0;">Revision Mode</span>
<span id="t57" style="position:absolute;left:700.5px;top:465.14px;font-size:12px;line-height:12px;font-weight:400;color:#2e2e2e;white-space:nowrap;transform:scaleX(0.9912);transform-origin:0 0;">Description</span>
<span id="t58" style="position:absolute;left:820.1px;top:456.64px;font-size:12px;line-height:12px;font-weight:400;color:#2e2e2e;white-space:nowrap;transform:scaleX(1.0011);transform-origin:0 0;">Quanti</span>
<span id="t59" style="position:absolute;left:820.1px;top:472.84px;font-size:12px;line-height:12px;font-weight:400;color:#2e2e2e;white-space:nowrap;transform:scaleX(1.2201);transform-origin:0 0;">ty</span>
<span id="t60" style="position:absolute;left:868.6px;top:456.64px;font-size:12px;line-height:12px;font-weight:400;color:#2e2e2e;white-space:nowrap;transform:scaleX(1.0292);transform-origin:0 0;">Unit of</span>
<span id="t61" style="position:absolute;left:868.6px;top:472.84px;font-size:12px;line-height:12px;font-weight:400;color:#2e2e2e;white-space:nowrap;transform:scaleX(0.8924);transform-origin:0 0;">Issue</span>
<span id="t62" style="position:absolute;left:930.1px;top:456.64px;font-size:12px;line-height:12px;font-weight:400;color:#2e2e2e;white-space:nowrap;transform:scaleX(0.9965);transform-origin:0 0;">Verification</span>
<span id="t63" style="position:absolute;left:930.1px;top:472.84px;font-size:12px;line-height:12px;font-weight:400;color:#2e2e2e;white-space:nowrap;transform:scaleX(1.0223);transform-origin:0 0;">Mode</span>
<span id="t64" style="position:absolute;left:1011.3px;top:448.74px;font-size:12px;line-height:12px;font-weight:400;color:#2e2e2e;white-space:nowrap;transform:scaleX(0.9696);transform-origin:0 0;">Has No</span>
<span id="t65" style="position:absolute;left:1011.3px;top:464.84px;font-size:12px;line-height:12px;font-weight:400;color:#2e2e2e;white-space:nowrap;transform:scaleX(0.9736);transform-origin:0 0;">Unresolved</span>
<span id="t66" style="position:absolute;left:1011.3px;top:480.84px;font-size:12px;line-height:12px;font-weight:400;color:#2e2e2e;white-space:nowrap;transform:scaleX(0.9512);transform-origin:0 0;">Defects</span>
<span id="t67" style="position:absolute;left:1093.2px;top:448.74px;font-size:12px;line-height:12px;font-weight:400;color:#2e2e2e;white-space:nowrap;transform:scaleX(0.9696);transform-origin:0 0;">Has No</span>
<span id="t68" style="position:absolute;left:1093.2px;top:464.84px;font-size:12px;line-height:12px;font-weight:400;color:#2e2e2e;white-space:nowrap;transform:scaleX(0.9736);transform-origin:0 0;">Unresolved</span>
<span id="t69" style="position:absolute;left:1093.2px;top:480.84px;font-size:12px;line-height:12px;font-weight:400;color:#2e2e2e;white-space:nowrap;transform:scaleX(0.9755);transform-origin:0 0;">Symptoms</span>
<span id="t70" style="position:absolute;left:1175.3px;top:448.74px;font-size:12px;line-height:12px;font-weight:400;color:#2e2e2e;white-space:nowrap;transform:scaleX(1.0232);transform-origin:0 0;">No</span>
<span id="t71" style="position:absolute;left:1175.3px;top:464.84px;font-size:12px;line-height:12px;font-weight:400;color:#2e2e2e;white-space:nowrap;transform:scaleX(0.9147);transform-origin:0 0;">Failed</span>
<span id="t72" style="position:absolute;left:1175.3px;top:480.84px;font-size:12px;line-height:12px;font-weight:400;color:#2e2e2e;white-space:nowrap;transform:scaleX(0.9227);transform-origin:0 0;">Status</span>
<span id="t73" style="position:absolute;left:1233.3px;top:464.54px;font-size:12px;line-height:12px;font-weight:400;color:#2e2e2e;white-space:nowrap;transform:scaleX(0.9220);transform-origin:0 0;">Process Vali...</span>
<span id="t74" style="position:absolute;left:1315px;top:448.64px;font-size:12px;line-height:12px;font-weight:400;color:#2e2e2e;white-space:nowrap;transform:scaleX(0.9839);transform-origin:0 0;">Validate</span>
<span id="t75" style="position:absolute;left:1315px;top:464.84px;font-size:12px;line-height:12px;font-weight:400;color:#2e2e2e;white-space:nowrap;transform:scaleX(0.9823);transform-origin:0 0;">Captured</span>
<span id="t76" style="position:absolute;left:1315px;top:480.84px;font-size:12px;line-height:12px;font-weight:400;color:#2e2e2e;white-space:nowrap;transform:scaleX(0.9900);transform-origin:0 0;">Materials</span>
<span id="t77" style="position:absolute;left:1396.4px;top:456.84px;font-size:12px;line-height:12px;font-weight:400;color:#2e2e2e;white-space:nowrap;transform:scaleX(0.9350);transform-origin:0 0;">Pack Items</span>
<span id="t78" style="position:absolute;left:1396.4px;top:472.84px;font-size:12px;line-height:12px;font-weight:400;color:#2e2e2e;white-space:nowrap;transform:scaleX(1.0021);transform-origin:0 0;">Individually</span>
<span id="t79" style="position:absolute;left:418.2px;top:505.84px;font-size:12px;line-height:12px;font-weight:400;color:#2e2e2e;white-space:nowrap;transform:scaleX(0.9839);transform-origin:0 0;">010-1026</span>
<span id="t80" style="position:absolute;left:578.2px;top:505.84px;font-size:12px;line-height:12px;font-weight:400;color:#2e2e2e;white-space:nowrap;transform:scaleX(0.9460);transform-origin:0 0;">Use Specific</span>
<span id="t81" style="position:absolute;left:700.5px;top:505.84px;font-size:12px;line-height:12px;font-weight:400;color:#2e2e2e;white-space:nowrap;transform:scaleX(0.9515);transform-origin:0 0;">Matte Black, Frame...</span>
<span id="t82" style="position:absolute;left:868.6px;top:505.84px;font-size:12px;line-height:12px;font-weight:400;color:#2e2e2e;white-space:nowrap;transform:scaleX(0.8853);transform-origin:0 0;">Pieces</span>
<span id="t83" style="position:absolute;left:931.1px;top:505.84px;font-size:12px;line-height:12px;font-weight:400;color:#2e2e2e;white-space:nowrap;transform:scaleX(0.9229);transform-origin:0 0;">Scan UID</span>
<span id="t84" style="position:absolute;left:1234.3px;top:505.84px;font-size:12px;line-height:12px;font-weight:400;color:#2e2e2e;white-space:nowrap;transform:scaleX(0.9858);transform-origin:0 0;">No Validati...</span>
<span id="t85" style="position:absolute;left:1316.4px;top:505.84px;font-size:12px;line-height:12px;font-weight:400;color:#2e2e2e;white-space:nowrap;transform:scaleX(1.0254);transform-origin:0 0;">Not Applicab</span>
<div style="position:absolute;left:1041px;top:505px;width:13px;height:13px;box-sizing:border-box;border:1px solid #6a7a86;background:#fff"></div>
<div style="position:absolute;left:1123px;top:505px;width:13px;height:13px;box-sizing:border-box;border:1px solid #6a7a86;background:#fff"></div>
<div style="position:absolute;left:1193px;top:505px;width:13px;height:13px;box-sizing:border-box;border:1px solid #6a7a86;background:#fff"></div>
<div style="position:absolute;left:1427px;top:505px;width:13px;height:13px;box-sizing:border-box;border:1px solid #6a7a86;background:#fff"></div>
<span id="t86" style="position:absolute;left:418.2px;top:532.84px;font-size:12px;line-height:12px;font-weight:400;color:#2e2e2e;white-space:nowrap;transform:scaleX(0.9839);transform-origin:0 0;">010-2049</span>
<span id="t87" style="position:absolute;left:578.2px;top:532.84px;font-size:12px;line-height:12px;font-weight:400;color:#2e2e2e;white-space:nowrap;transform:scaleX(0.9460);transform-origin:0 0;">Use Specific</span>
<span id="t88" style="position:absolute;left:700.5px;top:532.84px;font-size:12px;line-height:12px;font-weight:400;color:#2e2e2e;white-space:nowrap;transform:scaleX(0.9656);transform-origin:0 0;">100 Series Aluminu...</span>
<span id="t89" style="position:absolute;left:820.6px;top:532.84px;font-size:12px;line-height:12px;font-weight:400;color:#2e2e2e;white-space:nowrap;">1</span>
<span id="t90" style="position:absolute;left:868.6px;top:532.84px;font-size:12px;line-height:12px;font-weight:400;color:#2e2e2e;white-space:nowrap;transform:scaleX(0.8853);transform-origin:0 0;">Pieces</span>
<span id="t91" style="position:absolute;left:931.1px;top:532.84px;font-size:12px;line-height:12px;font-weight:400;color:#2e2e2e;white-space:nowrap;transform:scaleX(0.9229);transform-origin:0 0;">Scan UID</span>
<span id="t92" style="position:absolute;left:1234.3px;top:532.84px;font-size:12px;line-height:12px;font-weight:400;color:#2e2e2e;white-space:nowrap;transform:scaleX(0.9858);transform-origin:0 0;">No Validati...</span>
<span id="t93" style="position:absolute;left:1316.4px;top:532.84px;font-size:12px;line-height:12px;font-weight:400;color:#2e2e2e;white-space:nowrap;transform:scaleX(1.0254);transform-origin:0 0;">Not Applicab</span>
<div style="position:absolute;left:1041px;top:532px;width:13px;height:13px;box-sizing:border-box;border:1px solid #8c8c8c;background:#fff"></div>
<div style="position:absolute;left:1123px;top:532px;width:13px;height:13px;box-sizing:border-box;border:1px solid #8c8c8c;background:#fff"></div>
<div style="position:absolute;left:1193px;top:532px;width:13px;height:13px;box-sizing:border-box;border:1px solid #8c8c8c;background:#fff"></div>
<div style="position:absolute;left:1427px;top:532px;width:13px;height:13px;box-sizing:border-box;border:1px solid #8c8c8c;background:#fff"></div>
<span id="t94" style="position:absolute;left:418.2px;top:559.84px;font-size:12px;line-height:12px;font-weight:400;color:#2e2e2e;white-space:nowrap;transform:scaleX(0.9642);transform-origin:0 0;">1010-M6C0...</span>
<span id="t95" style="position:absolute;left:578.2px;top:559.84px;font-size:12px;line-height:12px;font-weight:400;color:#2e2e2e;white-space:nowrap;transform:scaleX(0.9460);transform-origin:0 0;">Use Specific</span>
<span id="t96" style="position:absolute;left:700.5px;top:559.84px;font-size:12px;line-height:12px;font-weight:400;color:#2e2e2e;white-space:nowrap;transform:scaleX(0.8739);transform-origin:0 0;">SCREW PHILLIPS F...</span>
<span id="t97" style="position:absolute;left:820.6px;top:559.84px;font-size:12px;line-height:12px;font-weight:400;color:#2e2e2e;white-space:nowrap;">1</span>
<span id="t98" style="position:absolute;left:868.6px;top:559.84px;font-size:12px;line-height:12px;font-weight:400;color:#2e2e2e;white-space:nowrap;transform:scaleX(0.8853);transform-origin:0 0;">Pieces</span>
<span id="t99" style="position:absolute;left:931.1px;top:559.84px;font-size:12px;line-height:12px;font-weight:400;color:#2e2e2e;white-space:nowrap;transform:scaleX(0.9229);transform-origin:0 0;">Scan UID</span>
<span id="t100" style="position:absolute;left:1234.3px;top:559.84px;font-size:12px;line-height:12px;font-weight:400;color:#2e2e2e;white-space:nowrap;transform:scaleX(0.9858);transform-origin:0 0;">No Validati...</span>
<span id="t101" style="position:absolute;left:1316.4px;top:559.84px;font-size:12px;line-height:12px;font-weight:400;color:#2e2e2e;white-space:nowrap;transform:scaleX(1.0254);transform-origin:0 0;">Not Applicab</span>
<div style="position:absolute;left:1041px;top:559px;width:13px;height:13px;box-sizing:border-box;border:1px solid #8c8c8c;background:#fff"></div>
<div style="position:absolute;left:1123px;top:559px;width:13px;height:13px;box-sizing:border-box;border:1px solid #8c8c8c;background:#fff"></div>
<div style="position:absolute;left:1193px;top:559px;width:13px;height:13px;box-sizing:border-box;border:1px solid #8c8c8c;background:#fff"></div>
<div style="position:absolute;left:1427px;top:559px;width:13px;height:13px;box-sizing:border-box;border:1px solid #8c8c8c;background:#fff"></div>
<span id="t102" style="position:absolute;left:418.2px;top:586.84px;font-size:12px;line-height:12px;font-weight:400;color:#2e2e2e;white-space:nowrap;transform:scaleX(0.9839);transform-origin:0 0;">042-1010</span>
<span id="t103" style="position:absolute;left:578.2px;top:586.84px;font-size:12px;line-height:12px;font-weight:400;color:#2e2e2e;white-space:nowrap;transform:scaleX(0.9460);transform-origin:0 0;">Use Specific</span>
<span id="t104" style="position:absolute;left:700.5px;top:586.84px;font-size:12px;line-height:12px;font-weight:400;color:#2e2e2e;white-space:nowrap;transform:scaleX(0.9548);transform-origin:0 0;">Shimano Claris</span>
<span id="t105" style="position:absolute;left:820.6px;top:586.84px;font-size:12px;line-height:12px;font-weight:400;color:#2e2e2e;white-space:nowrap;">1</span>
<span id="t106" style="position:absolute;left:868.6px;top:586.84px;font-size:12px;line-height:12px;font-weight:400;color:#2e2e2e;white-space:nowrap;transform:scaleX(0.8853);transform-origin:0 0;">Pieces</span>
<span id="t107" style="position:absolute;left:931.1px;top:586.84px;font-size:12px;line-height:12px;font-weight:400;color:#2e2e2e;white-space:nowrap;transform:scaleX(0.9229);transform-origin:0 0;">Scan UID</span>
<span id="t108" style="position:absolute;left:1234.3px;top:586.84px;font-size:12px;line-height:12px;font-weight:400;color:#2e2e2e;white-space:nowrap;transform:scaleX(0.9858);transform-origin:0 0;">No Validati...</span>
<span id="t109" style="position:absolute;left:1316.4px;top:586.84px;font-size:12px;line-height:12px;font-weight:400;color:#2e2e2e;white-space:nowrap;transform:scaleX(1.0254);transform-origin:0 0;">Not Applicab</span>
<div style="position:absolute;left:1041px;top:586px;width:13px;height:13px;box-sizing:border-box;border:1px solid #8c8c8c;background:#fff"></div>
<div style="position:absolute;left:1123px;top:586px;width:13px;height:13px;box-sizing:border-box;border:1px solid #8c8c8c;background:#fff"></div>
<div style="position:absolute;left:1193px;top:586px;width:13px;height:13px;box-sizing:border-box;border:1px solid #8c8c8c;background:#fff"></div>
<div style="position:absolute;left:1427px;top:586px;width:13px;height:13px;box-sizing:border-box;border:1px solid #8c8c8c;background:#fff"></div>
<div style="position:absolute;left:816px;top:498px;width:47px;height:26px;box-sizing:border-box;border:1px solid #9dbad0;background:#fff"></div>
<div style="position:absolute;left:833px;top:502px;width:1px;height:17px;background:#111"></div>
<span id="t110" style="position:absolute;left:833.5px;top:505.84px;font-size:12px;line-height:12px;font-weight:400;color:#2e2e2e;white-space:nowrap;">1</span>
<div style="position:absolute;left:846px;top:500px;width:15px;height:22px;box-sizing:border-box;border:1px solid #b5b5b5;background:#f4f4f4"></div>
<svg style="position:absolute;left:847px;top:501px;" width="13" height="20" viewBox="0 0 13 20"><path d="M3 7 L6.5 3.5 L10 7 M3 13 L6.5 16.5 L10 13" fill="none" stroke="#555" stroke-width="1.3"/></svg>
<span id="t111" style="position:absolute;left:403px;top:659.84px;font-size:18.5px;line-height:18.5px;font-weight:400;color:#666;white-space:nowrap;transform:scaleX(0.8992);transform-origin:0 0;">Labeling</span>
<span id="t112" style="position:absolute;left:413.4px;top:694.84px;font-size:12px;line-height:12px;font-weight:400;color:#222;white-space:nowrap;transform:scaleX(0.9631);transform-origin:0 0;">Label Template:</span>
<div style="position:absolute;left:513px;top:689px;width:917px;height:22px;box-sizing:border-box;border:1px solid #acacac;background:#fff"></div>
<div style="position:absolute;left:1413px;top:691px;width:15px;height:18px;box-sizing:border-box;border:1px solid #acacac;background:#f0f0f0"></div>
<svg style="position:absolute;left:1415px;top:695px;" width="12" height="9" viewBox="0 0 12 9"><path d="M2.3 2.5 L5.8 6 L9.3 2.5" fill="none" stroke="#555" stroke-width="1.8"/></svg>
<div style="position:absolute;left:1435px;top:689px;width:40px;height:22px;box-sizing:border-box;border:1px solid #acacac;background:linear-gradient(#f3f3f3,#e3e3e3)"></div>
<svg style="position:absolute;left:1447px;top:692px;" width="16" height="16" viewBox="0 0 16 16"><circle cx="8" cy="8" r="6.5" fill="#fff" stroke="#777" stroke-width="1.1"/><circle cx="8" cy="8" r="5" fill="#28a22f"/><path d="M8 4.5 V11.5 M4.5 8 H11.5" stroke="#fff" stroke-width="2"/></svg>
<span id="t113" style="position:absolute;left:403px;top:729.04px;font-size:18.5px;line-height:18.5px;font-weight:400;color:#666;white-space:nowrap;transform:scaleX(0.9253);transform-origin:0 0;">Options</span>
<span id="t114" style="position:absolute;left:413.4px;top:763.84px;font-size:12px;line-height:12px;font-weight:400;color:#222;white-space:nowrap;transform:scaleX(0.9546);transform-origin:0 0;">Batch Restrictions:</span>
<div style="position:absolute;left:513px;top:758px;width:250px;height:22px;box-sizing:border-box;border:1px solid #acacac;background:#fff"></div>
<span id="t115" style="position:absolute;left:518.4px;top:763.84px;font-size:12px;line-height:12px;font-weight:400;color:#222;white-space:nowrap;transform:scaleX(1.0046);transform-origin:0 0;">Allow units from any batch to be packed</span>
<div style="position:absolute;left:746px;top:761px;width:15px;height:18px;box-sizing:border-box;border:1px solid #acacac;background:#f0f0f0"></div>
<svg style="position:absolute;left:748px;top:765px;" width="12" height="9" viewBox="0 0 12 9"><path d="M2.3 2.5 L5.8 6 L9.3 2.5" fill="none" stroke="#555" stroke-width="1.8"/></svg>
<div style="position:absolute;left:413px;top:790px;width:13px;height:13px;box-sizing:border-box;border:1px solid #5a5a5a;background:#fff"></div>
<svg style="position:absolute;left:413px;top:790px;" width="13" height="13" viewBox="0 0 13 13"><path d="M2.5 6.5 L5.3 9.5 L10.5 3" fill="none" stroke="#222" stroke-width="1.6"/></svg>
<span id="t116" style="position:absolute;left:430.2px;top:790.04px;font-size:12px;line-height:12px;font-weight:400;color:#222;white-space:nowrap;transform:scaleX(0.9585);transform-origin:0 0;">Force Complete Boxes</span>
<div style="position:absolute;left:413px;top:816px;width:13px;height:13px;box-sizing:border-box;border:1px solid #5a5a5a;background:#fff"></div>
<span id="t117" style="position:absolute;left:430.2px;top:815.84px;font-size:12px;line-height:12px;font-weight:400;color:#222;white-space:nowrap;transform:scaleX(0.9867);transform-origin:0 0;">Allow Supervisory Override for Incomplete Boxes</span>
<div style="position:absolute;left:413px;top:841px;width:13px;height:13px;box-sizing:border-box;border:1px solid #5a5a5a;background:#fff"></div>
<span id="t118" style="position:absolute;left:430.2px;top:841.44px;font-size:12px;line-height:12px;font-weight:400;color:#222;white-space:nowrap;transform:scaleX(0.9770);transform-origin:0 0;">Export completed boxes as XML</span>
<div style="position:absolute;left:413px;top:867px;width:13px;height:13px;box-sizing:border-box;border:1px solid #5a5a5a;background:#fff"></div>
<svg style="position:absolute;left:413px;top:867px;" width="13" height="13" viewBox="0 0 13 13"><path d="M2.5 6.5 L5.3 9.5 L10.5 3" fill="none" stroke="#222" stroke-width="1.6"/></svg>
<span id="t119" style="position:absolute;left:430.2px;top:867.74px;font-size:12px;line-height:12px;font-weight:400;color:#222;white-space:nowrap;transform:scaleX(1.0025);transform-origin:0 0;">Validate Entry Conditions of this operation for each item added</span>
<div style="position:absolute;left:393px;top:901px;width:1082px;height:13px;box-sizing:border-box;border:1px solid #d5d5d5;border-bottom:none"></div>
<div style="position:absolute;left:401px;top:895px;width:72px;height:12px;background:#fff"></div>
<span id="t120" style="position:absolute;left:405.6px;top:897.24px;font-size:12px;line-height:12px;font-weight:700;color:#222;white-space:nowrap;transform:scaleX(0.9589);transform-origin:0 0;">Fire Alarms</span>
<div style="position:absolute;left:379px;top:916px;width:1127px;height:1px;background:#acacac"></div>
<div style="position:absolute;left:1429px;top:929px;width:75px;height:22px;box-sizing:border-box;border:1px solid #acacac;background:linear-gradient(#f2f2f2,#e2e2e2)"></div>
<span id="t121" style="position:absolute;left:1458.7px;top:934.44px;font-size:12px;line-height:12px;font-weight:400;color:#222;white-space:nowrap;transform:scaleX(0.9052);transform-origin:0 0;">OK</span>
</div>
</body></html>
